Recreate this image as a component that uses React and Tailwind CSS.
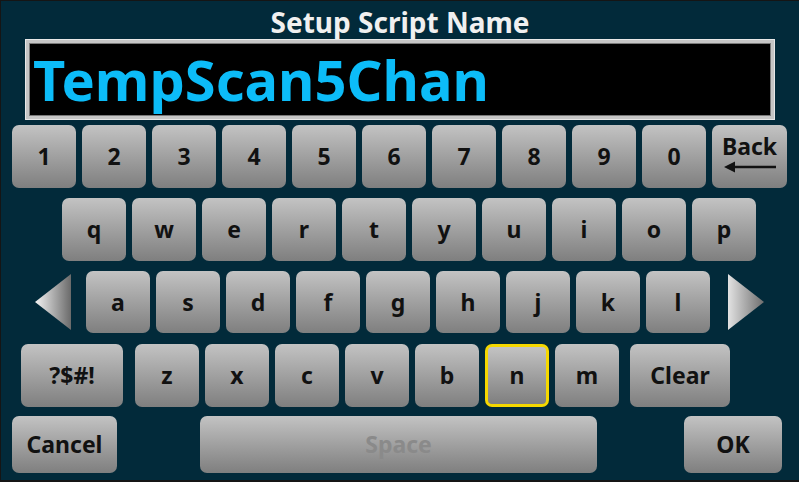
const font = { fontFamily: '"Noto Sans", "Open Sans", sans-serif' };

function Key({ children, className = "", w = "w-[64px]", h = "h-[63px]", text = "text-[#111]" }) {
  return (
    <div
      className={`${w} ${h} ${text} shrink-0 flex items-center justify-center rounded-[7px] bg-linear-to-b from-[#c3c3c3] to-[#7f7f7f] text-[23px] font-bold ${className}`}
    >
      {children}
    </div>
  );
}

function Arrow({ dir }) {
  const left = dir === "left";
  const id = left ? "ga-left" : "ga-right";
  return (
    <svg width="36" height="56" viewBox="0 0 36 56" className="shrink-0">
      <defs>
        <linearGradient id={id} x1="0" y1="0" x2="1" y2="0">
          {left ? (
            <>
              <stop offset="0" stopColor="#f4f4f4" />
              <stop offset="1" stopColor="#6a6a6a" />
            </>
          ) : (
            <>
              <stop offset="0" stopColor="#e2e2e2" />
              <stop offset="1" stopColor="#6e6e6e" />
            </>
          )}
        </linearGradient>
      </defs>
      <polygon
        points={left ? "36,0 0,28 36,56" : "0,0 36,28 0,56"}
        fill={`url(#${id})`}
      />
    </svg>
  );
}

export default function App() {
  const row1 = ["1", "2", "3", "4", "5", "6", "7", "8", "9", "0"];
  const row2 = ["q", "w", "e", "r", "t", "y", "u", "i", "o", "p"];
  const row3 = ["a", "s", "d", "f", "g", "h", "j", "k", "l"];
  const row4 = ["z", "x", "c", "v", "b", "n", "m"];

  return (
    <div
      className="w-[799px] h-[482px] overflow-hidden bg-[#022a3a] border-t border-l border-b-2 border-[#151515] flex flex-col"
      style={font}
    >
      <div className="h-[38px] flex items-center justify-center text-[28px] font-bold text-[#f0f0f0] leading-none pt-[3px]">
        Setup Script Name
      </div>

      <div className="ml-[24px] w-[750px] h-[81px] border-[4px] border-[#c6c6c6] shadow-[inset_0_0_0_1px_#7a7a7a] outline outline-1 outline-[#e8e8e8] -outline-offset-1 bg-black flex items-center pl-[4px]">
        <span className="text-[56px] font-bold text-[#0cbcf8] leading-none -mt-[2px]">
          TempScan5Chan
        </span>
      </div>

      <div className="mt-[5px] ml-[11px] flex gap-[6px]">
        {row1.map((k) => (
          <Key key={k}>{k}</Key>
        ))}
        <Key w="w-[75px]" className="flex-col gap-[3px]">
          <span className="leading-none -mt-[6px]">Back</span>
          <svg width="52" height="12" viewBox="0 0 52 12">
            <line x1="6" y1="6" x2="52" y2="6" stroke="#111" strokeWidth="2.5" />
            <polygon points="0,6 11,0.5 11,11.5" fill="#111" />
          </svg>
        </Key>
      </div>

      <div className="mt-[10px] ml-[61px] flex gap-[6px]">
        {row2.map((k) => (
          <Key key={k}>{k}</Key>
        ))}
      </div>

      <div className="mt-[10px] ml-[34px] flex items-center">
        <Arrow dir="left" />
        <div className="ml-[15px] flex gap-[6px]">
          {row3.map((k) => (
            <Key key={k} h="h-[62px]">
              {k}
            </Key>
          ))}
        </div>
        <div className="ml-[18px]">
          <Arrow dir="right" />
        </div>
      </div>

      <div className="mt-[11px] ml-[20px] flex">
        <Key w="w-[102px]">?$#!</Key>
        <div className="ml-[12px] flex gap-[6px]">
          {row4.map((k) => (
            <Key
              key={k}
              className={k === "n" ? "border-[3px] border-[#f5d800]" : ""}
            >
              {k}
            </Key>
          ))}
        </div>
        <Key w="w-[100px]" className="ml-[11px]">
          Clear
        </Key>
      </div>

      <div className="mt-[9px] ml-[11px] flex">
        <Key w="w-[105px]" h="h-[57px]">
          Cancel
        </Key>
        <Key w="w-[397px]" h="h-[57px]" text="text-[#8a8a8a]" className="ml-[83px]">
          Space
        </Key>
        <Key w="w-[98px]" h="h-[57px]" className="ml-[87px]">
          OK
        </Key>
      </div>
    </div>
  );
}
